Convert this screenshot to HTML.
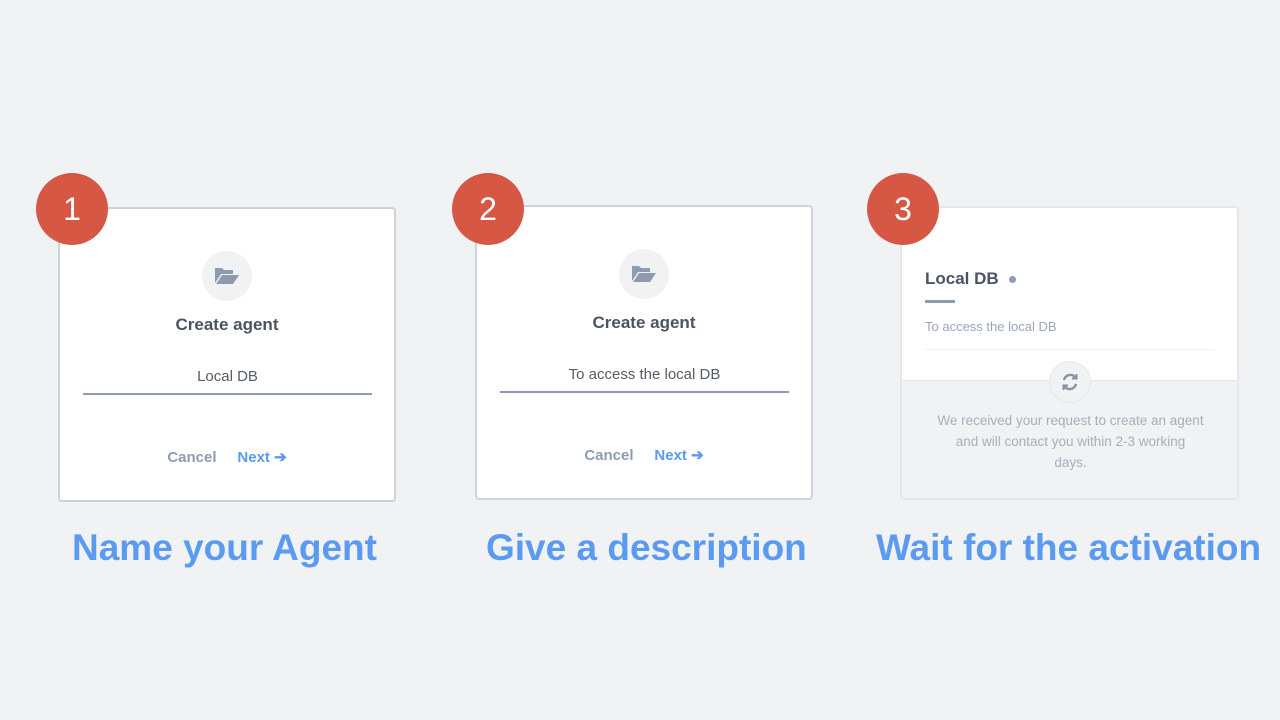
<!DOCTYPE html>
<html><head><style>
body{margin:0;width:1280px;height:720px;background:#f1f2f4;font-family:"Liberation Sans",sans-serif;position:relative;overflow:hidden}
.card{position:absolute;background:#fff;border:2px solid #cdd3dd;border-radius:4px;box-sizing:border-box}
.circ{position:absolute;width:72px;height:72px;border-radius:50%;background:#d65844;color:#fff;font-size:32px;text-align:center;line-height:72px}
.lbl{position:absolute;top:527px;font-size:37px;font-weight:bold;color:#5b9bef;white-space:nowrap}
.icon{position:absolute;width:50px;height:50px;border-radius:50%;background:#f1f2f4}
.title{position:absolute;width:100%;text-align:center;font-size:17px;font-weight:bold;color:#4b5463}
.inp{position:absolute;text-align:center;font-size:15px;color:#555c66;border-bottom:2px solid #8f9bb0;padding-bottom:8px}
.btns{position:absolute;width:100%;text-align:center;font-size:15px;font-weight:bold}
</style></head><body>

<div class="card" style="left:58px;top:207px;width:338px;height:295px">
 <div class="icon" style="left:142px;top:42px"><svg width="50" height="50" viewBox="0 0 50 50"><path d="M13 32V17h7l2 2h9v4H19l-6 9zM14 33l6-9h17l-6 9z" fill="#8e9ab0"/></svg></div>
 <div class="title" style="top:106px">Create agent</div>
 <div class="inp" style="left:23px;width:289px;top:159px">Local DB</div>
 <div class="btns" style="top:239px"><span style="color:#8f9bb0">Cancel</span>&nbsp;&nbsp;&nbsp;&nbsp;&nbsp;<span style="color:#5b9bef">Next ➔</span></div>
</div>
<div class="circ" style="left:36px;top:173px">1</div>
<div class="lbl" style="left:72px">Name your Agent</div>

<div class="card" style="left:475px;top:205px;width:338px;height:295px">
 <div class="icon" style="left:142px;top:42px"><svg width="50" height="50" viewBox="0 0 50 50"><path d="M13 32V17h7l2 2h9v4H19l-6 9zM14 33l6-9h17l-6 9z" fill="#8e9ab0"/></svg></div>
 <div class="title" style="top:106px">Create agent</div>
 <div class="inp" style="left:23px;width:289px;top:159px">To access the local DB</div>
 <div class="btns" style="top:239px"><span style="color:#8f9bb0">Cancel</span>&nbsp;&nbsp;&nbsp;&nbsp;&nbsp;<span style="color:#5b9bef">Next ➔</span></div>
</div>
<div class="circ" style="left:452px;top:173px">2</div>
<div class="lbl" style="left:486px">Give a description</div>

<div class="card" style="left:900px;top:206px;width:339px;height:294px;border-color:#e4e7ec;overflow:hidden">
 <div style="position:absolute;left:23px;top:61px;font-size:17px;font-weight:bold;color:#4b5463">Local DB <span style="display:inline-block;width:7px;height:7px;border-radius:50%;background:#8f9bb0;margin-left:6px;vertical-align:middle"></span></div>
 <div style="position:absolute;left:23px;top:92px;width:30px;height:3px;background:#8f9bb0"></div>
 <div style="position:absolute;left:23px;top:111px;font-size:13px;color:#9aa5b8">To access the local DB</div>
 <div style="position:absolute;left:23px;top:141px;width:290px;height:1px;background:#eef0f3"></div>
 <div style="position:absolute;left:0;top:172px;width:100%;height:130px;background:#f1f2f4;border-top:1px solid #e4e7ec"></div>
 <div style="position:absolute;left:147px;top:153px;width:40px;height:40px;border-radius:50%;background:#f1f2f4;border:1px solid #e4e7ec"><svg width="40" height="40" viewBox="0 0 40 40" fill="none" stroke="#8592a8" stroke-width="2.4"><path d="M14 18a6.5 6.5 0 0 1 11.5-2.5"/><path d="M26 22a6.5 6.5 0 0 1-11.5 2.5"/><path d="M26.5 12v4.5H22" stroke-width="2"/><path d="M13.5 28v-4.5H18" stroke-width="2"/></svg></div>
 <div style="position:absolute;left:10px;width:317px;top:202px;text-align:center;font-size:13.5px;line-height:21px;color:#a5afbf">We received your request to create an agent<br>and will contact you within 2-3 working<br>days.</div>
</div>
<div class="circ" style="left:867px;top:173px">3</div>
<div class="lbl" style="left:876px">Wait for the activation</div>
</body></html>
